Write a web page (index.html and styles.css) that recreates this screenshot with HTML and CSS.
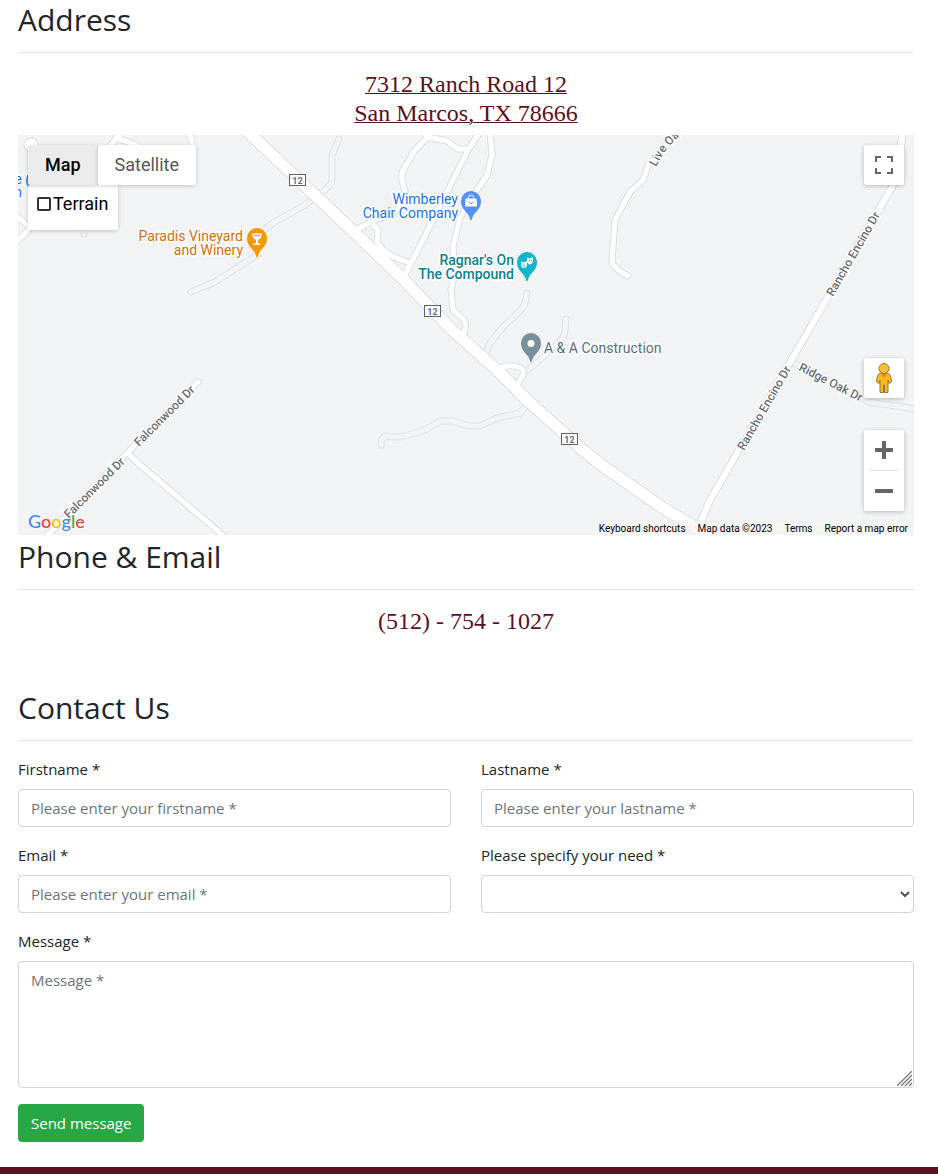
FILE: index.html
```html
<!DOCTYPE html>
<html lang="en">
<head>
<meta charset="utf-8">
<meta name="viewport" content="width=device-width, initial-scale=1">
<title>Contact Us</title>
<link rel="stylesheet" href="styles.css">
</head>
<body>
<main class="page">
  <section class="address">
    <h2 class="heading">Address</h2>
    <hr class="rule">
    <p class="detail address-text"><a class="detail-link underlined" href="#map">7312 Ranch Road 12<br>San Marcos, TX 78666</a></p>
    <div class="map" id="map">
      <svg class="map-canvas" viewBox="18 135 896 400" preserveAspectRatio="xMidYMid slice" role="img" aria-label="Map of Ranch Road 12">
        <defs>
          <path id="pin" d="M0 19.500C-.8 19.500-1 17-2 15C-4 11-10 8-10 0A10 10 0 0 1 10 0C10 8 4 11 2 15C1 17 .8 19.500 0 19.500Z"/>
          <path id="live-oak" d="M656 167L662 156Q667 147 688 128"/>
          <g id="drives">
            <path d="M339 139L332 155V180Q332 186 320 193L305 205L273 223L254 239M257 255L215 282L191 292"/>
            <path d="M527 293Q526 305 520 311L503 327L490 343L485 355"/>
            <path d="M566 319L565 330Q565 336 560 341L533 366L525 372"/>
            <path d="M526 406L520 413L497 418L480 426H470L452 421H440L425 430L405 436Q397 438 385 436Q381 438 381 445"/>
            <path d="M791 362L863 398L868 402L916 409M80 222L84 234"/>
          </g>
          <g id="streets">
            <path d="M479 133L468 150L433 220L422 242L411 263L402 280"/>
            <path d="M468 149H458L447 141L428 137L415 150L402 172L402 180L406 195L397 210L383 217L370 222L355 231M428 137L423 133"/>
            <path d="M371 222L378 230L377 242L385 252L394 257L410 263"/>
            <path d="M490 133L492 155L487 175L477 190L460 218L453 247L455 270L451 290L453 310L464 320Q468 325 462 337"/>
            <path d="M498 370Q504 365 514 366Q526 368 523 375L516 387"/>
            <path d="M676 134L648 166L643 180L630 192L615 220L612 260Q612 268 628 276"/>
            <path d="M198 382L127 453L46 537M128 453L139 464L225 537"/>
            <path d="M14 213L30 228L14 245M31 227L65 190"/>
            <path d="M122 132L105 152M116 138L137 145M188 133L192 140V152M31 145L34 160"/>
            <circle cx="31" cy="145" r="4"/>
          </g>
          <path id="encino" d="M903 133L900 150Q900 166 892 187L803 340L710 500L699 526"/>
          <path id="highway" d="M248 132L355 233L403 279L450 328L497 370L527 400L567 436Q580 448 600 464L663 508L710 536"/>
        </defs>
        <g class="roads">
          <use href="#drives" class="drive-edge"/>
          <use href="#drives" class="drive-fill"/>
          <use href="#streets" class="street-edge"/>
          <use href="#encino" class="encino-edge"/>
          <use href="#highway" class="highway-edge"/>
          <use href="#streets" class="street-fill"/>
          <use href="#encino" class="encino-fill"/>
          <use href="#highway" class="highway-fill"/>
        </g>
        <g class="badge">
          <rect x="289.500" y="174.500" width="16" height="11"/><text x="297.500" y="184">12</text>
          <rect x="424.500" y="305.500" width="16" height="11"/><text x="432.500" y="315">12</text>
          <rect x="561.500" y="433.500" width="16" height="11"/><text x="569.500" y="443">12</text>
        </g>
        <g class="street-name">
          <text><textPath href="#live-oak">Live Oak Dr</textPath></text>
          <text transform="translate(833 297) rotate(-60)">Rancho Encino Dr</text>
          <text transform="translate(744 451) rotate(-60)">Rancho Encino Dr</text>
          <text transform="translate(798 370) rotate(27)">Ridge Oak Dr</text>
          <text transform="translate(139 447) rotate(-45)">Falconwood Dr</text>
          <text transform="translate(69 519) rotate(-45)">Falconwood Dr</text>
        </g>
        <g class="place shop">
          <use href="#pin" x="471" y="201" fill="#5491f5"/>
          <path d="M465.500 198.500H476.500L477 206.500H465Z" fill="#fff"/>
          <path d="M468.500 199V197.500A2.500 2.500 0 0 1 473.500 197.500V199" class="pin-line"/>
          <path d="M468.500 201.500Q471 205.500 473.500 201.500" class="pin-smile"/>
          <text x="458" y="204">Wimberley</text><text x="458" y="218">Chair Company</text>
          <text x="22" y="184">e</text><text x="22" y="197">n</text>
          <use href="#pin" x="36" y="180" fill="#4285f4"/>
        </g>
        <g class="place food">
          <use href="#pin" x="257" y="238" fill="#f29900"/>
          <path d="M252 233.500H262L261 238L258 240V243.500H260.500V245H253.500V243.500H256V240L253 238Z" fill="#fff"/>
          <path d="M254 235.500H260" stroke="#f29900"/>
          <text x="243" y="241">Paradis Vineyard</text><text x="243" y="255">and Winery</text>
        </g>
        <g class="place venue">
          <use href="#pin" x="527" y="262" fill="#12b5cb"/>
          <path d="M527 257.500L529 258.500L531 258L533 257V261Q532 264.500 529 264.500L527 262ZM521 261L523 262H525L527 261V265Q526.500 268 524 268T521 265Z" fill="#fff"/>
          <path d="M529 260.500H530M531 260.500H532M522 264H523.500M525 264H526M523 266H525" stroke="#12b5cb"/>
          <text x="514" y="265">Ragnar's On</text><text x="514" y="279">The Compound</text>
        </g>
        <g class="place business">
          <use href="#pin" x="531" y="343" fill="#78909c"/><circle cx="531" cy="343.500" r="3.500" fill="#fff"/>
          <text x="544" y="353">A &amp; A Construction</text>
        </g>
      </svg>
      <div class="map-types">
        <div class="type-buttons">
          <button class="type-button selected" type="button">Map</button>
          <button class="type-button" type="button">Satellite</button>
        </div>
        <label class="terrain"><input class="terrain-box" type="checkbox">Terrain</label>
      </div>
      <button class="map-control fullscreen" type="button" aria-label="Toggle fullscreen">
        <svg width="18" height="18" viewBox="0 0 18 18"><path d="M1 6V1H6M12 1H17V6M17 12V17H12M6 17H1V12" fill="none" stroke="#666" stroke-width="2"/></svg>
      </button>
      <div class="map-tools">
        <button class="map-control" type="button" aria-label="Street View">
          <svg width="18" height="32" viewBox="0 0 18 32" stroke="#8f7a45" stroke-linejoin="round"><path d="M5 11H13Q16 12 16.500 20L14 21.500L13 18V30.500H9.500V23H8.500V30.500H5V18L4 21.500L1.500 20Q2 12 5 11Z" fill="#fbb917"/><path d="M5.500 11.500H12.500L9 16Z" fill="#e9842c" stroke="none"/><circle cx="9" cy="6.500" r="5" fill="#fdbf2d"/></svg>
        </button>
        <div class="zoom">
          <button class="map-control" type="button" aria-label="Zoom in"><svg width="18" height="18" viewBox="0 0 18 18"><path d="M0 9H18M9 0V18" stroke="#666" stroke-width="4"/></svg></button>
          <div class="zoom-rule"></div>
          <button class="map-control" type="button" aria-label="Zoom out"><svg width="18" height="18" viewBox="0 0 18 18"><path d="M0 9H18" stroke="#666" stroke-width="4"/></svg></button>
        </div>
      </div>
      <a class="google" href="#map" aria-label="Google"><span class="blue">G</span><span class="red">o</span><span class="yellow">o</span><span class="blue">g</span><span class="green">l</span><span class="red">e</span></a>
      <div class="map-credits">
        <button class="credit" type="button">Keyboard shortcuts</button>
        <span class="credit">Map data ©2023</span>
        <a class="credit" href="#map">Terms</a>
        <a class="credit" href="#map">Report a map error</a>
      </div>
    </div>
  </section>
  <section class="phone">
    <h2 class="heading">Phone &amp; Email</h2>
    <hr class="rule">
    <p class="detail"><a class="detail-link" href="tel:5127541027">(512) - 754 - 1027</a></p>
  </section>
  <section>
    <h2 class="heading">Contact Us</h2>
    <hr class="rule">
    <form class="form">
      <div class="field"><label class="label" for="firstname">Firstname *</label><input class="control" id="firstname" type="text" placeholder="Please enter your firstname *"></div>
      <div class="field"><label class="label" for="lastname">Lastname *</label><input class="control" id="lastname" type="text" placeholder="Please enter your lastname *"></div>
      <div class="field"><label class="label" for="email">Email *</label><input class="control" id="email" type="email" placeholder="Please enter your email *"></div>
      <div class="field"><label class="label" for="need">Please specify your need *</label><select class="control select" id="need"><option value=""></option></select></div>
      <div class="field wide"><label class="label" for="message">Message *</label>
        <div class="message-box"><textarea class="control message" id="message" placeholder="Message *"></textarea>
          <svg class="grip" width="15" height="15" viewBox="0 0 15 15"><path d="M0 15L15 0M4 15L15 4M8 15L15 8M12 15L15 12" stroke="#777" stroke-width="1.300"/></svg></div>
      </div>
      <button class="send" type="submit">Send message</button>
    </form>
  </section>
</main>
<footer class="footer"></footer>
</body>
</html>
```
FILE: styles.css
```css
* { box-sizing: border-box; }

body {
  display: flex;
  flex-direction: column;
  min-height: 100vh;
  margin: 0;
  color: #212529;
  background: #fff;
  font: 15px/24px "Open Sans", "Noto Sans", sans-serif;
}

button, input, select, textarea { font: inherit; }

.page { padding: 0 24px 25px 18px; }

.heading { margin: 0; padding-top: 3px; font-size: 30px; font-weight: 400; line-height: 38px; }
.rule { height: 1px; margin: 13px 0 16px; border: 0; background: #e5e5e5; }
.address .heading { padding-top: 1px; }

.detail {
  margin: 0;
  padding-top: 1px;
  font: 24px/29px "Liberation Serif", serif;
  text-align: center;
}
.address-text { margin-bottom: 7px; }
.detail-link { color: #5b0f1f; text-decoration: none; }
.underlined { text-decoration: underline; text-decoration-thickness: 1px; }
.phone { margin-bottom: 50px; }

/* Map */
.map {
  position: relative;
  height: 400px;
  overflow: hidden;
  background: #f1f3f4;
  font-family: Roboto, sans-serif;
}
.map-canvas { display: block; width: 100%; height: 100%; }
.roads { fill: none; stroke-linecap: round; stroke-linejoin: round; }
.drive-edge { stroke: #dfe1e4; stroke-width: 7px; }
.drive-fill { stroke: #f1f3f4; stroke-width: 5px; }
.street-edge { stroke: #dcdee2; stroke-width: 7px; }
.street-fill { stroke: #fff; stroke-width: 5px; }
.encino-edge { stroke: #dcdee2; stroke-width: 8px; }
.encino-fill { stroke: #fff; stroke-width: 6px; }
.highway-edge { stroke: #dcdee2; stroke-width: 13px; }
.highway-fill { stroke: #fff; stroke-width: 11px; }

.badge rect { fill: #fff; stroke: #5f6368; }
.badge text { fill: #5f7280; font-size: 9px; font-weight: 700; text-anchor: middle; }
.street-name text {
  fill: #6b6e73;
  stroke: #fff;
  stroke-width: 3px;
  paint-order: stroke;
  font-size: 12px;
  font-weight: 500;
}
.place text {
  stroke: #fff;
  stroke-width: 3px;
  stroke-linejoin: round;
  paint-order: stroke;
  font-size: 14px;
  text-anchor: end;
}
.pin-line { fill: none; stroke: #fff; }
.pin-smile { fill: none; stroke: #5491f5; }
.shop text { fill: #1a73e8; }
.food text { fill: #d56e0c; }
.venue text { fill: #0b828c; font-weight: 500; }
.business text { fill: #546e7a; text-anchor: start; }

.map-types { position: absolute; top: 10px; left: 10px; font-size: 18px; }
.type-buttons { display: flex; position: relative; }
.type-button {
  height: 40px;
  padding: 0 17px;
  border: 0;
  border-radius: 2px;
  background: #fff;
  color: #565656;
  box-shadow: 0 1px 4px rgba(0, 0, 0, .2);
}
.selected { background: #ebebeb; color: #000; font-weight: 500; }
.terrain {
  display: flex;
  align-items: flex-start;
  gap: 2px;
  width: 90px;
  height: 45px;
  padding: 7px 8px;
  border-radius: 2px;
  background: #fff;
  color: #000;
  box-shadow: 0 1px 4px rgba(0, 0, 0, .2);
}
.terrain-box {
  appearance: none;
  width: 14px;
  height: 14px;
  margin: 5px 0 0 1px;
  border: 2px solid #333;
  border-radius: 2px;
}

.map-control {
  display: flex;
  align-items: center;
  justify-content: center;
  width: 40px;
  height: 40px;
  padding: 0;
  border: 0;
  border-radius: 2px;
  background: #fff;
  box-shadow: 0 1px 4px rgba(0, 0, 0, .25);
}
.fullscreen { position: absolute; top: 10px; right: 10px; }
.map-tools {
  position: absolute;
  right: 10px;
  bottom: 24px;
  display: grid;
  gap: 32px;
}
.zoom { border-radius: 2px; background: #fff; box-shadow: 0 1px 4px rgba(0, 0, 0, .25); }
.zoom .map-control { box-shadow: none; }
.zoom-rule { height: 1px; margin: 0 5px; background: #e2e2e2; }

.google {
  position: absolute;
  bottom: 2px;
  left: 10px;
  font: 500 18px/24px Lato, sans-serif;
  text-decoration: none;
  text-shadow: 0 0 2px #fff, 0 0 2px #fff;
}
.blue { color: #4285f4; }
.red { color: #ea4335; }
.yellow { color: #fbbc05; }
.green { color: #34a853; }

.map-credits {
  position: absolute;
  right: 0;
  bottom: 0;
  display: flex;
  font-size: 10px;
  line-height: 12px;
}
.credit {
  padding: 2px 6px 0;
  border: 0;
  background: rgba(245, 245, 245, .7);
  color: #000;
  text-decoration: none;
}

/* Form */
.form {
  display: grid;
  grid-template-columns: 1fr 1fr;
  gap: 16px 30px;
}
.field { display: grid; gap: 8px; }
.wide { grid-column: 1 / -1; }
.control {
  display: block;
  width: 100%;
  height: 38px;
  padding: 6px 12px;
  border: 1px solid #ced4da;
  border-radius: 4px;
  background: #fff;
  color: #495057;
}
.control::placeholder { color: #6c757d; opacity: 1; }
.select { padding: 6px 0; }
.message-box { position: relative; }
.message { height: 127px; resize: none; }
.grip { position: absolute; right: 2px; bottom: 2px; }
.send {
  justify-self: start;
  height: 38px;
  padding: 0 13px;
  border: 0;
  border-radius: 4px;
  background: #28a745;
  color: #fff;
}

.footer { flex: 1; min-height: 7px; background: #5b0f1f; }
```
